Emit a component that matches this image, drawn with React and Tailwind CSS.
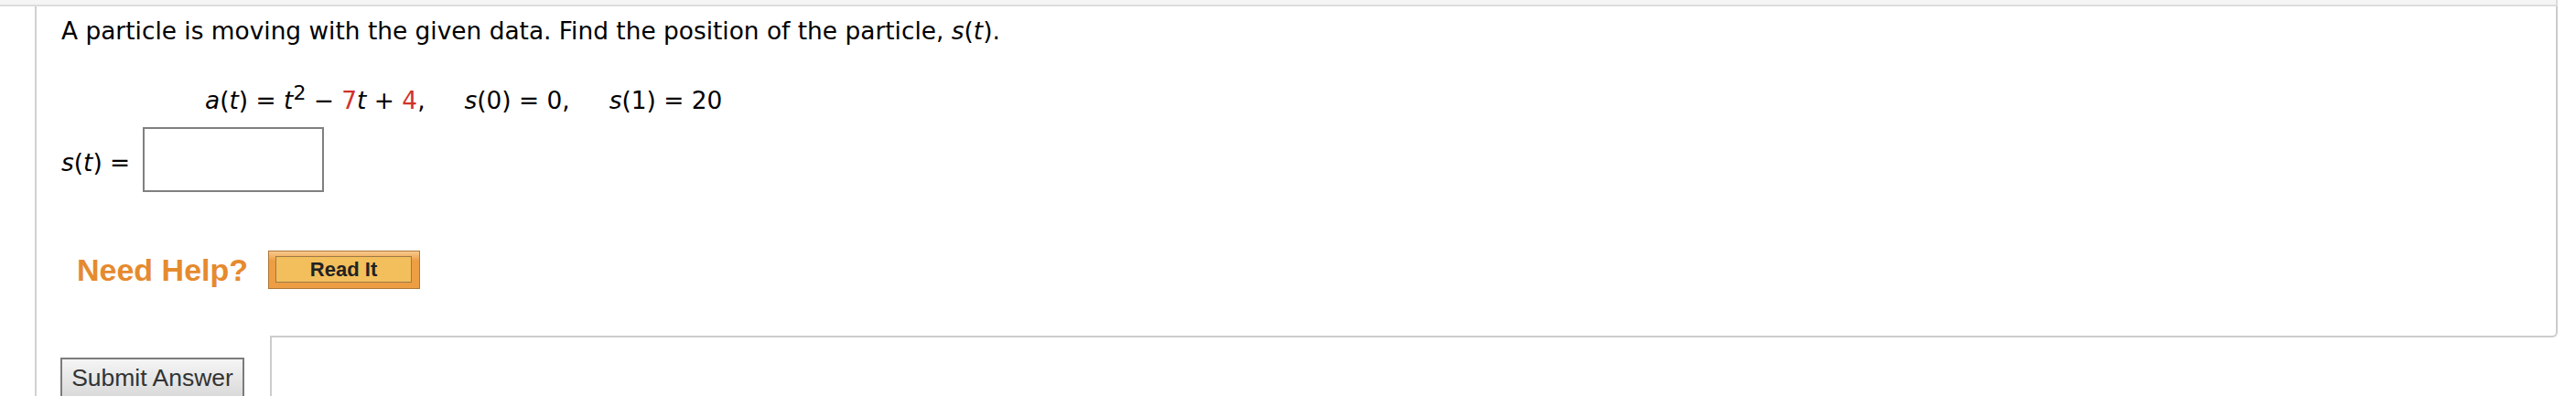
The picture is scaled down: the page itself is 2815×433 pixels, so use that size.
import React from "react";

const red = "text-[#d1322a]";

function Equation() {
  return (
    <div className="mt-[42px] h-[30px] pl-[157px] text-[26.4px] leading-[30px] whitespace-nowrap">
      <span>
        <i>a</i>(<i>t</i>) = <i>t</i>
        <span className="text-[22px] leading-none align-[10px]">2</span> −{" "}
        <span className={red}>7</span>
        <i>t</i> + <span className={red}>4</span>,
      </span>
      <span className="ml-[43px]">
        <i>s</i>(0) = 0,
      </span>
      <span className="ml-[43px]">
        <i>s</i>(1) = 20
      </span>
    </div>
  );
}

function ReadIt() {
  return (
    <button
      type="button"
      className="ml-[22px] w-[166px] h-[42px] border border-[#b0773a] bg-linear-to-b from-[#f7ca8e] from-0% to-[#ed9e43] to-25% pl-[7px] pr-[8px] pt-[5px] pb-[6px]"
    >
      <div className="h-full border border-[#9d7a46] bg-[#f3bf5c] flex items-center justify-center font-['Liberation_Sans',Arial,sans-serif] font-bold text-[22px] text-[#222]">
        Read It
      </div>
    </button>
  );
}

export default function App() {
  return (
    <div className="w-[2815px] h-[433px] overflow-hidden bg-white font-['DejaVu_Sans',Verdana,sans-serif] text-black">
      {/* top strip */}
      <div className="w-[2795px] h-[7px] bg-[#f5f5f5] border-b-2 border-r-2 border-[#dcdcdc]" />

      <div className="ml-[38px] w-[2757px] h-[426px] border-l-2 border-[#d2d2d2] flex flex-col">
        {/* question box */}
        <div className="flex flex-col">
          <div className="h-[356px] border-r-2 border-[#cccccc] pl-[27px] pt-[12px]">
            <p className="h-[30px] text-[26.4px] leading-[30px] whitespace-nowrap">
              A particle is moving with the given data. Find the position of the particle, <i>s</i>(<i>t</i>).
            </p>

            <Equation />

            <div className="mt-[18px] h-[71px] flex items-start">
              <span className="mt-[24px] text-[26.4px] leading-[30px] whitespace-nowrap">
                <i>s</i>(<i>t</i>) =
              </span>
              <input
                type="text"
                className="ml-[14px] w-[198px] h-[71px] border-2 border-[#808080] bg-white outline-none"
              />
            </div>

            <div className="mt-[64px] h-[42px] flex items-center">
              <span className="ml-[17px] font-['Liberation_Sans',Arial,sans-serif] font-bold text-[34px] leading-[37px] text-[#e68a2e] whitespace-nowrap">
                Need Help?
              </span>
              <ReadIt />
            </div>
          </div>
          <div className="flex">
            <div className="w-[255px]" />
            <div className="flex-1 h-[6px] border-r-2 border-b-2 border-[#cccccc] rounded-br-[6px]" />
          </div>
        </div>

        {/* bottom row */}
        <div className="flex flex-1">
          <div className="w-[255px] pl-[26px] pt-[22px]">
            <button
              type="button"
              className="w-[201px] h-[44px] border-2 border-[#7b7b7b] bg-linear-to-b from-[#f5f5f5] to-[#dadada] font-['Liberation_Sans',Arial,sans-serif] text-[26.5px] leading-[28px] text-[#333] whitespace-nowrap"
            >
              Submit Answer
            </button>
          </div>
          <div className="flex-1 border-l-2 border-[#cccccc]" />
        </div>
      </div>
    </div>
  );
}
